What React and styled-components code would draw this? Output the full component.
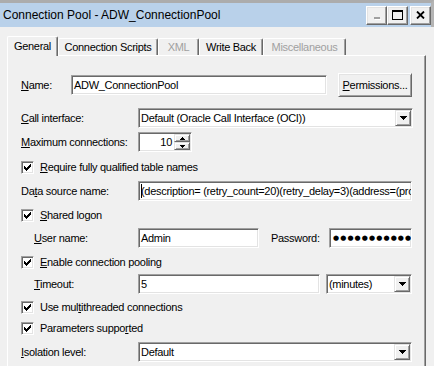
import React from "react";
import styled, { createGlobalStyle } from "styled-components";

const GlobalStyle = createGlobalStyle`
  html, body {
    margin: 0;
    padding: 0;
    background: #f0f0f0;
  }
  body {
    font-family: "Liberation Sans", Arial, sans-serif;
    font-size: 11px;
    letter-spacing: -0.3px;
    color: #000;
  }
`;

const Window = styled.div`
  width: 434px;
  height: 366px;
  overflow: hidden;
  display: flex;
  flex-direction: column;
  background: #f0f0f0;
`;

const TitleBar = styled.div`
  height: 24px;
  border-top: 3px solid #acacac;
  border-right: 3px solid #b4b4b4;
  background: #b9d1ea;
  display: flex;
  align-items: center;
  padding-left: 3px;
  flex-shrink: 0;
`;

const Title = styled.div`
  flex: 1;
  font-size: 12px;
  letter-spacing: 0;
  white-space: nowrap;
`;

const CaptionButton = styled.div`
  width: 21px;
  height: 19px;
  box-sizing: border-box;
  display: flex;
  align-items: center;
  justify-content: center;
  background: #f0f0f0;
  border: 1px solid;
  border-color: #fff #696969 #696969 #fff;
  box-shadow: inset -1px -1px #a0a0a0, inset 1px 1px #e3e3e3;
  margin-left: ${(p) => p.$gap || 0}px;
`;

const TabStrip = styled.div`
  display: flex;
  align-items: flex-end;
  height: 19px;
  margin-top: 9px;
  padding-left: 7px;
  flex-shrink: 0;
`;

const Tab = styled.div`
  width: ${(p) => p.$w}px;
  height: ${(p) => (p.$active ? 20 : 17)}px;
  margin-bottom: ${(p) => (p.$active ? -1 : 0)}px;
  position: relative;
  z-index: ${(p) => (p.$active ? 1 : 0)};
  box-sizing: border-box;
  display: flex;
  align-items: center;
  justify-content: center;
  padding-bottom: ${(p) => (p.$active ? 2 : 1)}px;
  border-top: 1px solid #fff;
  border-left: 1px solid #fff;
  border-right: 1px solid #696969;
  box-shadow: inset -1px 0 #a0a0a0;
  border-radius: 2px 2px 0 0;
  background: #f0f0f0;
  color: ${(p) => (p.$disabled ? "#a0a0a0" : "#000")};
  white-space: nowrap;
`;

const Panel = styled.div`
  margin-left: 7px;
  width: 419px;
  flex: 1;
  box-sizing: border-box;
  border-top: 1px solid #fff;
  border-left: 1px solid #fff;
  border-right: 1px solid #696969;
  box-shadow: inset -1px 0 #a0a0a0;
  padding: 17px 0 0 13px;
  display: flex;
  flex-direction: column;
`;

const Row = styled.div`
  display: flex;
  align-items: center;
  height: ${(p) => p.$h || 20}px;
  margin-top: ${(p) => p.$mt || 0}px;
  flex-shrink: 0;
`;

const Label = styled.div`
  width: ${(p) => p.$w || 117}px;
  padding-left: ${(p) => (p.$indent ? 13 : 0)}px;
  margin-left: ${(p) => p.$ml || 0}px;
  box-sizing: border-box;
  flex-shrink: 0;
  white-space: nowrap;
`;

const U = styled.span`
  text-decoration: underline;
`;

const Field = styled.div`
  width: ${(p) => p.$w}px;
  height: 20px;
  margin-left: ${(p) => p.$ml || 0}px;
  box-sizing: border-box;
  border: 1px solid;
  border-color: #a0a0a0 #fff #fff #a0a0a0;
  box-shadow: inset 1px 1px #696969, inset -1px -1px #e3e3e3;
  background: #fff;
  display: flex;
  align-items: center;
  overflow: hidden;
  white-space: nowrap;
  flex-shrink: 0;
`;

const FieldText = styled.span`
  flex: 1;
  min-width: 0;
  padding: 0 ${(p) => (p.$right ? 2 : 0)}px 0 2px;
  overflow: hidden;
  white-space: nowrap;
  display: flex;
  align-items: center;
  justify-content: ${(p) => (p.$right ? "flex-end" : "flex-start")};
`;

const Caret = styled.span`
  width: 1px;
  height: 14px;
  background: #000;
  margin-right: -1px;
  flex-shrink: 0;
`;

const Dots = styled.span`
  font-family: "DejaVu Sans", sans-serif;
  font-size: 7px;
  letter-spacing: 1.1px;
  padding-left: 1px;
`;

const RaisedButton = styled.div`
  box-sizing: border-box;
  display: flex;
  align-items: center;
  justify-content: center;
  background: #f0f0f0;
  border: 1px solid;
  border-color: #e3e3e3 #696969 #696969 #e3e3e3;
  box-shadow: inset 1px 1px #fff, inset -1px -1px #a0a0a0;
  flex-shrink: 0;
`;

const Button = styled(RaisedButton)`
  width: 74px;
  height: 24px;
  margin-left: 11px;
  border-color: #fff #696969 #696969 #fff;
  box-shadow: inset 1px 1px #e3e3e3, inset -1px -1px #a0a0a0;
`;

const DropButton = styled(RaisedButton)`
  width: 16px;
  height: 16px;
  margin-right: 1px;
`;

const SpinColumn = styled.div`
  display: flex;
  flex-direction: column;
  width: 16px;
  height: 16px;
  margin-right: 1px;
`;

const SpinButton = styled(RaisedButton)`
  width: 16px;
  height: 8px;
`;

const Box = styled.span`
  width: 13px;
  height: 13px;
  box-sizing: border-box;
  border: 1px solid;
  border-color: #a0a0a0 #fff #fff #a0a0a0;
  box-shadow: inset 1px 1px #696969, inset -1px -1px #e3e3e3;
  background: #fff;
  display: flex;
  align-items: center;
  justify-content: center;
  margin-right: 6px;
  flex-shrink: 0;
`;

function Arrow({ up, small }) {
  const w = small ? 5 : 7;
  const h = small ? 3 : 4;
  const pts = up
    ? `0,${h} ${w},${h} ${w / 2},0`
    : `0,0 ${w},0 ${w / 2},${h}`;
  return (
    <svg width={w} height={h} viewBox={`0 0 ${w} ${h}`} shapeRendering="crispEdges">
      <polygon points={pts} fill="#000" />
    </svg>
  );
}

function Check() {
  return (
    <svg width="7" height="7" viewBox="0 0 7 7" shapeRendering="crispEdges">
      <path
        d="M6 0h1v1h-1z M5 1h2v1h-2z M0 2h1v1h-1z M4 2h3v1h-3z M0 3h2v1h-2z M3 3h3v1h-3z M0 4h5v1h-5z M1 5h3v1h-3z M2 6h1v1h-1z"
        fill="#000"
      />
    </svg>
  );
}

function CheckRow({ mt, children }) {
  return (
    <Row $h={16} $mt={mt}>
      <Box>
        <Check />
      </Box>
      <span>{children}</span>
    </Row>
  );
}

function Combo({ w, ml, children }) {
  return (
    <Field $w={w} $ml={ml}>
      <FieldText>{children}</FieldText>
      <DropButton>
        <Arrow />
      </DropButton>
    </Field>
  );
}

export default function App() {
  return (
    <>
      <GlobalStyle />
      <Window>
        <TitleBar>
          <Title>Connection Pool - ADW_ConnectionPool</Title>
          <CaptionButton>
            <svg width="8" height="9" viewBox="0 0 8 9" shapeRendering="crispEdges">
              <rect x="1" y="6" width="6" height="2" fill="#a0a0a0" />
              <rect x="2" y="8" width="6" height="1" fill="#fff" />
            </svg>
          </CaptionButton>
          <CaptionButton>
            <svg width="11" height="10" viewBox="0 0 11 10" shapeRendering="crispEdges">
              <path d="M0 0h11v10H0z M1 2v7h9V2z" fill="#000" fillRule="evenodd" />
            </svg>
          </CaptionButton>
          <CaptionButton $gap={2}>
            <svg width="9" height="8" viewBox="0 0 9 8">
              <path d="M1 0.5 L8 7.5 M8 0.5 L1 7.5" stroke="#000" strokeWidth="1.8" />
            </svg>
          </CaptionButton>
        </TitleBar>

        <TabStrip>
          <Tab $w={51} $active>
            General
          </Tab>
          <Tab $w={100}>Connection Scripts</Tab>
          <Tab $w={41} $disabled>
            XML
          </Tab>
          <Tab $w={64}>Write Back</Tab>
          <Tab $w={83} $disabled>
            Miscellaneous
          </Tab>
        </TabStrip>

        <Panel>
          <Row $h={24}>
            <Label $w={50}>
              <U>N</U>ame:
            </Label>
            <Field $w={256}>
              <FieldText>ADW_ConnectionPool</FieldText>
            </Field>
            <Button>
              <span>
                <U>P</U>ermissions...
              </span>
            </Button>
          </Row>

          <Row $mt={11}>
            <Label>
              <U>C</U>all interface:
            </Label>
            <Combo w={275}>Default (Oracle Call Interface (OCI))</Combo>
          </Row>

          <Row $mt={4}>
            <Label>
              <U>M</U>aximum connections:
            </Label>
            <Field $w={54}>
              <FieldText $right>10</FieldText>
              <SpinColumn>
                <SpinButton>
                  <Arrow up small />
                </SpinButton>
                <SpinButton>
                  <Arrow small />
                </SpinButton>
              </SpinColumn>
            </Field>
          </Row>

          <CheckRow mt={7}>
            <U>R</U>equire fully qualified table names
          </CheckRow>

          <Row $mt={6}>
            <Label>
              Da<U>t</U>a source name:
            </Label>
            <Field $w={274}>
              <FieldText>
                <Caret />
                (description= (retry_count=20)(retry_delay=3)(address=(pro
              </FieldText>
            </Field>
          </Row>

          <CheckRow mt={6}>
            <U>S</U>hared logon
          </CheckRow>

          <Row $mt={5}>
            <Label $indent>
              <U>U</U>ser name:
            </Label>
            <Field $w={121}>
              <FieldText>Admin</FieldText>
            </Field>
            <Label $w={58} $ml={12}>
              Password:
            </Label>
            <Field $w={83}>
              <FieldText>
                <Dots>●●●●●●●●●●●</Dots>
              </FieldText>
            </Field>
          </Row>

          <CheckRow mt={6}>
            <U>E</U>nable connection pooling
          </CheckRow>

          <Row $mt={4}>
            <Label $indent>
              <U>T</U>imeout:
            </Label>
            <Field $w={182}>
              <FieldText>5</FieldText>
            </Field>
            <Combo w={86} ml={6}>
              (minutes)
            </Combo>
          </Row>

          <CheckRow mt={5}>
            Use mul<U>t</U>ithreaded connections
          </CheckRow>

          <CheckRow mt={5}>
            Parameters suppo<U>r</U>ted
          </CheckRow>

          <Row $mt={6}>
            <Label>
              <U>I</U>solation level:
            </Label>
            <Combo w={274}>Default</Combo>
          </Row>
        </Panel>
      </Window>
    </>
  );
}
